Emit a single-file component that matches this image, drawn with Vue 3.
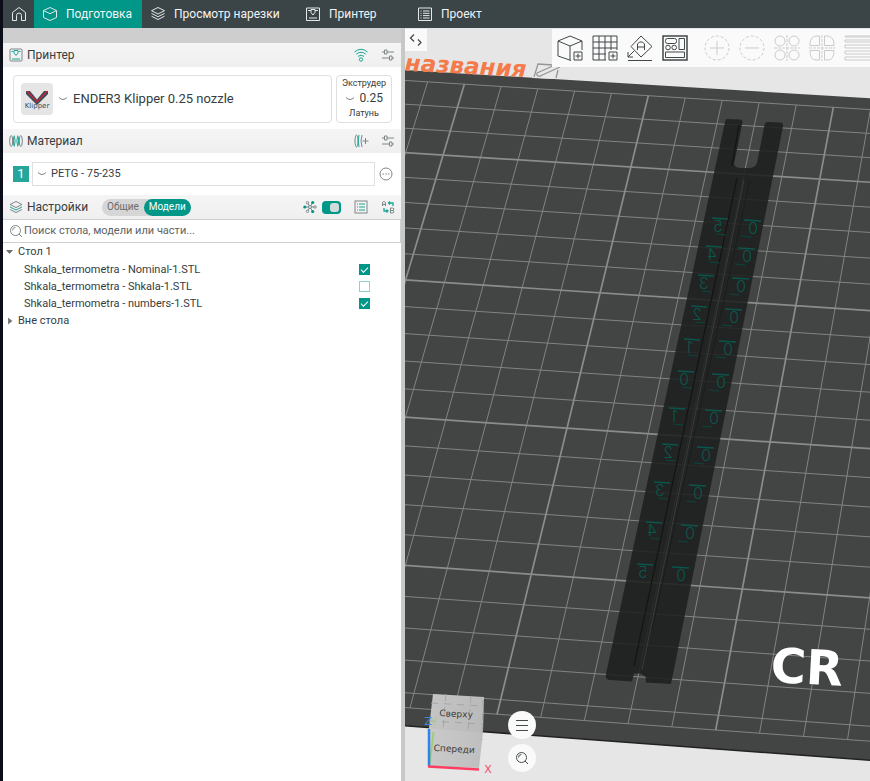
<script setup>
import { ref } from 'vue'

const tabs = [
  { id: 'prepare', label: 'Подготовка', icon: 'cube' },
  { id: 'preview', label: 'Просмотр нарезки', icon: 'layers' },
  { id: 'device', label: 'Принтер', icon: 'printer' },
  { id: 'project', label: 'Проект', icon: 'list' },
]
const activeTab = ref('prepare')
const scope = ref('objects')
const advanced = ref(true)
const query = ref('')
const parts = ref([
  { name: 'Shkala_termometra - Nominal-1.STL', printable: true },
  { name: 'Shkala_termometra - Shkala-1.STL', printable: false },
  { name: 'Shkala_termometra - numbers-1.STL', printable: true },
])

// Perspective projection of the bed: columns u, rows v -> scene coordinates
const q = [[648.3, 95.7], [833.3, 107.3], [742.3, 589], [531.3, 574.2]]
const sx = q[0][0] - q[1][0] + q[2][0] - q[3][0]
const sy = q[0][1] - q[1][1] + q[2][1] - q[3][1]
const dx1 = q[1][0] - q[2][0], dy1 = q[1][1] - q[2][1]
const dx2 = q[3][0] - q[2][0], dy2 = q[3][1] - q[2][1]
const det = dx1 * dy2 - dy1 * dx2
const g = (sx * dy2 - sy * dx2) / det
const h = (dx1 * sy - dy1 * sx) / det
function project(u, v) {
  const s = u / 5, t = v / 18
  const w = 1 + g * s + h * t
  const x = (q[0][0] + (q[1][0] - q[0][0] + g * q[1][0]) * s + (q[3][0] - q[0][0] + h * q[3][0]) * t) / w
  const y = (q[0][1] + (q[1][1] - q[0][1] + g * q[1][1]) * s + (q[3][1] - q[0][1] + h * q[3][1]) * t) / w
  return `${x.toFixed(2)} ${y.toFixed(2)}`
}
const END = 22.45
let minor = '', major = ''
for (let u = -12; u <= 12; u++) {
  const d = `M${project(u, 0)}L${project(u, END)}`
  if (u % 5 === 0) major += d
  else minor += d
}
for (let v = 0; v <= 22; v++) {
  const d = `M${project(-12, v)}L${project(12, v)}`
  if (v % 5 === 3) major += d
  else minor += d
}
minor += `M${project(-12, END)}L${project(12, END)}`

const marks = [
  ['5', 718, 226, 753, 228], ['4', 712, 254, 747, 256], ['3', 704, 283, 741, 286],
  ['2', 697, 314, 734, 317], ['1', 690, 347, 728, 349], ['0', 684, 379, 721, 382],
  ['1', 675, 416, 714, 418], ['2', 668, 452, 706, 455], ['3', 660, 490, 698, 493],
  ['4', 652, 530, 690, 533], ['5', 643, 572, 681, 575],
].flatMap(([n, x, y, x2, y2], i) => [
  { n, x, y, bar: `M${x - 6} ${y - 8}l16 1`, tick: i < 10 ? `M${x - 2} ${y + 8}l10 1` : '' },
  { n: '0', x: x2, y: y2, bar: `M${x2 - 9} ${y2 - 8}l17 1`, tick: i < 10 ? `M${x2 - 12} ${y2 + 8}l10 1` : '' },
])
</script>

<template>
  <div class="app">
    <nav class="topbar" aria-label="Разделы">
      <button class="home" aria-label="Домой">
        <svg width="16" height="16" viewBox="0 0 16 16"><path d="M1.500 14.500V6.500L8 1.500l6.500 5v8h-4V9.500a2.500 2.500 0 0 0-5 0v5z" /></svg>
      </button>
      <button v-for="t in tabs" :key="t.id" class="tab" :class="[t.id, { active: activeTab === t.id }]" @click="activeTab = t.id">
        <svg width="16" height="16" viewBox="0 0 16 16">
          <path v-if="t.icon === 'cube'" d="M8 1.500 14.500 4.500v7L8 14.500 1.500 11.500v-7zM1.500 4.500 8 7.700l6.500-3.200" />
          <path v-else-if="t.icon === 'layers'" d="M8 1.500 14.500 4.700 8 8 1.500 4.700zM1.500 7.400 8 10.700l6.500-3.300M1.500 10.200 8 13.500l6.500-3.300" />
          <path v-else-if="t.icon === 'printer'" d="M1.500 2h13v12.500h-13zM4 12h8M3 4.500h3M10 4.500h3M6 3.500h4v3L8 9 6 6.500z" />
          <path v-else d="M1.500 2h13v12.500h-13zM3.500 5h1M6 5h6.500M3.500 7.300h1M6 7.300h6.500M3.500 9.600h1M6 9.600h6.500M3.500 12h1M6 12h6.500" />
        </svg>
        <span>{{ t.label }}</span>
      </button>
    </nav>

    <main class="workspace">
      <aside class="sidebar">
        <div class="spacer"></div>
        <section>
          <header class="head">
            <svg class="ico" width="14" height="14" viewBox="0 0 14 14"><rect class="gr" x="1" y="1" width="12" height="12" rx="1" /><path class="te" d="M3 11h8M2.500 3.500h2M9.500 3.500h2M5 2.500h4v2.500L7 7.500 5 5z" /></svg>
            <h2>Принтер</h2>
            <button class="tool" aria-label="Подключение">
              <svg width="16" height="16" viewBox="0 0 16 16"><path class="te" d="M1.500 5Q8-.5 14.500 5M3.200 7.200Q8 3.200 12.800 7.200M5 9.400Q8 7 11 9.400" /><circle class="te" cx="8" cy="12.500" r="1.700" /></svg>
            </button>
            <button class="tool" aria-label="Параметры принтера">
              <svg width="14" height="14" viewBox="0 0 14 14"><path class="gr" d="M1 4h2.500M6 4h7M1 10h7.500M11 10h2M3.500 2H6v4H3.500zM8.500 8H11v4H8.500z" /></svg>
            </button>
          </header>
          <div class="cards">
            <div class="card printer">
              <svg class="logo" width="32" height="32" viewBox="0 0 32 32">
                <rect width="32" height="32" rx="4" fill="#e5e5e5" />
                <path d="M5 8h4l7 8.500L23 8h4v3L16 22 5 11z" fill="#38495b" /><path d="M5 8h2l9 10 9-10h2L16 20z" fill="#c62831" />
                <text x="16" y="25" text-anchor="middle">Klipper</text>
              </svg>
              <svg class="chev" width="10" height="6" viewBox="0 0 10 6"><path d="M1 1.500Q5 5.500 9 1.500" /></svg>
              <select aria-label="Принтер"><option>ENDER3 Klipper 0.25 nozzle</option></select>
            </div>
            <div class="card extruder">
              <label for="nozzle">Экструдер</label>
              <div class="nozzle">
                <svg class="chev" width="10" height="6" viewBox="0 0 10 6"><path d="M1 1.500Q5 5.500 9 1.500" /></svg>
                <select id="nozzle"><option>0.25</option></select>
              </div>
              <span>Латунь</span>
            </div>
          </div>
        </section>

        <section>
          <header class="head">
            <svg class="ico" width="14" height="14" viewBox="0 0 14 14"><ellipse class="gr" cx="2.200" cy="7" rx="1.500" ry="5.500" /><ellipse class="gr" cx="11.800" cy="7" rx="1.500" ry="5.500" /><path class="te" d="M5.200 1.500q2 5.500 0 11M8.800 1.500q-2 5.500 0 11M4.800 2.500q-.8 4.500 0 9M9.200 2.500q.8 4.500 0 9" /></svg>
            <h2>Материал</h2>
            <button class="tool" aria-label="Добавить материал">
              <svg width="16" height="16" viewBox="0 0 16 16"><ellipse class="gr" cx="3.500" cy="8" rx="1.500" ry="6" /><path class="te" d="M6 2Q4.500 8 6 14" /><path class="gr" d="M9 2Q7 8 9 14M9.500 8h6M12.500 5v6" /></svg>
            </button>
            <button class="tool" aria-label="Параметры материала">
              <svg width="14" height="14" viewBox="0 0 14 14"><path class="gr" d="M1 4h2.500M6 4h7M1 10h7.500M11 10h2M3.500 2H6v4H3.500zM8.500 8H11v4H8.500z" /></svg>
            </button>
          </header>
          <div class="filament">
            <span class="slot">1</span>
            <div class="combo">
              <svg class="chev" width="10" height="6" viewBox="0 0 10 6"><path d="M1 1.500Q5 5.500 9 1.500" /></svg>
              <select aria-label="Материал"><option>PETG - 75-235</option></select>
            </div>
            <button class="more" aria-label="Ещё">
              <svg width="14" height="14" viewBox="0 0 14 14"><circle class="gr" cx="7" cy="7" r="6" /><path class="gr" d="M3.500 7H5M6.300 7h1.500M9 7h1.500" /></svg>
            </button>
          </div>
        </section>

        <section>
          <header class="head">
            <svg class="ico" width="14" height="14" viewBox="0 0 14 14"><path class="gr" d="M7 1.500 13 4.500 7 7.500 1 4.500z" /><path class="te" d="M1 7l6 3 6-3" /><path class="gr" d="M1 9.500l6 3 6-3" /></svg>
            <h2>Настройки</h2>
            <div class="switch">
              <button :class="{ on: scope === 'global' }" @click="scope = 'global'">Общие</button>
              <button :class="{ on: scope === 'objects' }" @click="scope = 'objects'">Модели</button>
            </div>
            <div class="tools">
              <svg width="14" height="14" viewBox="0 0 14 14"><path class="gr" d="M2 7h10M4.500 2.700l5 8.600M9.500 2.700l-5 8.600" /><g class="gr" fill="#f2f2f2"><circle cx="4.500" cy="2.700" r="1.200" /><circle cx="4.500" cy="11.300" r="1.200" /><circle cx="12" cy="7" r="1.200" /><circle cx="7" cy="7" r="1.500" /></g><g fill="#009688"><circle cx="1.800" cy="7" r="1.600" /><circle cx="9.700" cy="2.500" r="1.600" /><circle cx="9.700" cy="11.500" r="1.600" /></g></svg>
              <input v-model="advanced" class="toggle" type="checkbox" aria-label="Расширенные настройки">
              <button class="tool" aria-label="Список параметров">
                <svg width="14" height="14" viewBox="0 0 14 14"><rect class="gr" x="1" y="1" width="12" height="12" /><path class="te" d="M3 4h1M5 4h6M3 7h1M5 7h6M3 10h1M5 10h6" /></svg>
              </button>
              <button class="tool" aria-label="Сравнить профили">
                <svg width="14" height="14" viewBox="0 0 14 14"><path class="gr" d="M1.500 6V2.500L3 1.500l1.500 1V6M1.500 4.500h3M9.500 8v5h2q2 0 1-2.500 1-2.500-1-2.500zM9.500 10.500h2.500" /><path class="te" d="M12 6V3H7.500M9 1.500 7.500 3 9 4.500M3 8v3h4M5.500 9.500 7 11l-1.500 1.500" stroke-width="1.300" /></svg>
              </button>
            </div>
          </header>
          <div class="search">
            <svg width="14" height="14" viewBox="0 0 14 14"><circle class="gr" cx="6.500" cy="6.500" r="5" /><path class="gr" d="M10 10l3 3M3.500 6.500a3 3 0 0 1 3-3" /></svg>
            <input v-model="query" type="text" aria-label="Поиск" placeholder="Поиск стола, модели или части...">
          </div>
          <ul class="tree">
            <li><div class="row"><i class="open"></i>Стол 1</div>
              <ul>
                <li v-for="(p, i) in parts" :key="p.name" class="row part">
                  <label :for="'part' + i">{{ p.name }}</label>
                  <input :id="'part' + i" v-model="p.printable" type="checkbox">
                </li>
              </ul>
            </li>
            <li><div class="row"><i></i>Вне стола</div></li>
          </ul>
        </section>
      </aside>

      <section class="view" aria-label="Рабочий стол">
        <svg class="scene" viewBox="405 28 465 753" preserveAspectRatio="xMinYMin slice">
          <defs>
            <linearGradient id="face" x1="0" y1="0" x2="1" y2="0"><stop offset="0" stop-color="#c9c9c9" /><stop offset="1" stop-color="#bdbdbd" /></linearGradient>
            <clipPath id="bed"><path d="M380 68.500 900 100v662.500L380 724z" /></clipPath>
          </defs>
          <path d="M380 68.500 900 100v662.500L380 724z" fill="#434544" />
          <path d="M380 724 900 762.500" stroke="#222" stroke-width="1.500" />
          <g fill="none" clip-path="url(#bed)">
            <path :d="minor" stroke="#828483" stroke-width="1" />
            <path :d="major" stroke="#8b8d8c" stroke-width="1.700" />
          </g>
          <text class="plate" x="0" y="0" transform="translate(526 77) rotate(3)" text-anchor="end">названия</text>
          <path d="M537 64l22 1-3 14-24-1z" fill="#e8e8e8" /><path d="M553 65l-15-1-4 13M540 76l20-9M537 73l18-8M537 73q-1 4 4 3M558 70l-2 8" fill="none" stroke="#969696" stroke-width="1.300" />
          <path d="M727 119l13 .5q3 0 2.500 3L734 164q1 4 7 4h8q6 0 8-5l7.500-38q.5-3 3-3l13 .5q3 0 2.500 4L671 684l-25-1.500-.5-6-5.500-3h-6l-2 8-22-1.500q-5-.5-4-6L725 122q.5-3 2-3z" fill="#1e201f" fill-opacity=".88" />
          <g fill="none">
            <path d="M739 125 732 166M737 178 634 666" stroke="#121413" stroke-width="1.200" />
            <path d="M744 180 642 670" stroke="#404241" stroke-width=".8" />
            <path d="M750 180 652 630" stroke="#1b1d1c" stroke-width="1" />
          </g>
          <g class="marks">
            <g v-for="(m, i) in marks" :key="i">
              <path :d="m.bar" /><path v-if="m.tick" :d="m.tick" class="thin" />
              <text :transform="`translate(${m.x} ${m.y + 6}) scale(-1 1)`" text-anchor="middle">{{ m.n }}</text>
            </g>
          </g>
          <text class="brand" transform="translate(770 682) rotate(3)">CR</text>

          <path d="M433 694 484 697l-1 35-4 36-51-2 1-38z" fill="url(#face)" fill-opacity=".97" />
          <path d="M431 703l52 3M429 721l54 3M446 694l-3 36M471 696l-3 36M483 700l-1 40" fill="none" stroke="#a6a6a6" stroke-dasharray="7 6" />
          <g class="cube"><text transform="translate(456 717) rotate(3)">Сверху</text><text transform="translate(454 752) rotate(3)">Спереди</text></g>
          <g fill="none" stroke-width="2"><path d="M433.500 732 429.500 765" stroke="#9fce78" /><path d="M429 729v37" stroke="#2d83ee" stroke-width="2.500" /><path d="M428 766.500l51 3" stroke="#ff3d62" stroke-width="2.500" /></g>
          <g class="axis"><text x="428" y="725" fill="#3c87dd">Z</text><text x="434" y="726" fill="#aacb8e">Y</text><text x="488" y="773" fill="#f7486a">X</text></g>
        </svg>

        <button class="collapse" aria-label="Свернуть панель">
          <svg width="16" height="14" viewBox="0 0 16 14"><path d="M6 1.500 2.500 5 6 8.500M10 6.500l3 3-3 3" /></svg>
        </button>
        <div class="toolbar">
          <button aria-label="Добавить модель"><svg width="26" height="26" viewBox="0 0 26 26"><path d="M14 25.500 1 21V6l12-5 12 5v9M1 6l12 5 12-5M13 11v14" /><path d="M17 17h8v8h-8zM21 18.500v5M18.500 21h5" /></svg></button>
          <button aria-label="Добавить стол"><svg width="26" height="26" viewBox="0 0 26 26"><path d="M14 25H1V1h24v14M1 7h24M1 13h24M1 19h13M7 1v24M13 1v24M19 1v14M17 17h8v8h-8zM21 18.500v5M18.500 21h5" /></svg></button>
          <button aria-label="Автоориентация"><svg width="26" height="26" viewBox="0 0 26 26"><path d="M14 1 25 11.500 14 22 4 11.500zM10.500 15v-6l2-2h3l2 2v6M10.500 12h7M7 16l-6 6M1 17v5h5M1 25.500h24" /></svg></button>
          <button aria-label="Расставить"><svg width="26" height="26" viewBox="0 0 26 26"><path d="M1 1h24v24H1z" stroke-width="1.500" /><rect x="3.500" y="3.500" width="11" height="5" rx="2" /><circle cx="6" cy="12.500" r="2.300" /><circle cx="12.200" cy="12.500" r="2.300" /><path d="M17 3.500h5.500v11H17zM3.500 17h19v5.500h-19z" /></svg></button>
          <button class="off first" aria-label="Добавить копию" disabled><svg width="26" height="26" viewBox="0 0 26 26"><circle cx="13" cy="13" r="12" stroke-dasharray="3 2" /><path d="M6 13h14M13 6v14" /></svg></button>
          <button class="off" aria-label="Убрать копию" disabled><svg width="26" height="26" viewBox="0 0 26 26"><circle cx="13" cy="13" r="12" stroke-dasharray="3 2" /><path d="M6 13h14" /></svg></button>
          <button class="off" aria-label="Разделить на модели" disabled><svg width="26" height="26" viewBox="0 0 26 26"><circle cx="6" cy="6" r="5" /><circle cx="20" cy="6" r="5" /><circle cx="6" cy="20" r="5" /><circle cx="20" cy="20" r="5" /><path d="M0 13h26M13 0v26" stroke-dasharray="3 1" /></svg></button>
          <button class="off" aria-label="Разделить на части" disabled><svg width="26" height="26" viewBox="0 0 26 26"><path d="M10.500 1v9.500H1V8q1-7 7-7zM15.500 1v9.500H25V8q-1-7-7-7zM10.500 25v-9.500H1q0 9.500 6 9.500zM15.500 25v-9.500H25q0 9.500-6 9.500z" /><path d="M0 13h26M13 0v26" stroke-dasharray="3 1" /></svg></button>
          <button class="off" aria-label="Высота слоёв" disabled><svg width="26" height="26" viewBox="0 0 26 26"><path d="M1 1h26v1H1zM1 5h26v2H1zM1 10h26v3H1zM1 16h26v3H1zM1 22h26v3H1z" /></svg></button>
        </div>
        <div class="floating">
          <button aria-label="Меню вида"><svg width="14" height="14" viewBox="0 0 14 14"><path d="M1 2.500h12M1 7.500h12M1 12.500h12" /></svg></button>
          <button aria-label="Масштаб"><svg width="14" height="14" viewBox="0 0 14 14"><circle cx="6.500" cy="6.500" r="5" /><path d="M10 10l3 3M3.500 6.500a3 3 0 0 1 3-3" /></svg></button>
        </div>
      </section>
    </main>
  </div>
</template>

<style>
body { margin: 0; background: #fff; }
</style>

<style scoped>
* { box-sizing: border-box; }
.app { min-height: 100vh; display: flex; flex-direction: column; border-left: 3px solid #0b0e19; font: 11px/18px Roboto, "Noto Sans", sans-serif; color: #363d40; }
button, select, input { font: inherit; color: inherit; margin: 0; }
button { border: 0; padding: 0; background: none; display: flex; align-items: center; justify-content: center; }
svg { fill: none; stroke-width: 1; flex: none; display: block; }
.gr { stroke: #7f8688; }
.te { stroke: #1da597; }
.topbar { display: flex; height: 28px; background: #3b4446; color: #f2f4f4; overflow: hidden; }
.topbar svg { stroke: #e4e8e8; }
.home { width: 31px; }
.tab { gap: 8px; padding: 0 8px; justify-content: flex-start; font-size: 12px; white-space: nowrap; flex: none; }
.tab.active { background: #009688; }
.tab.prepare { width: 108px; }
.tab.preview { width: 155px; }
.tab.device { width: 112px; }
.workspace { flex: 1; display: flex; }
.sidebar { flex: 0 0 402px; background: #fff; border-right: 4px solid #c8c8c8; }
.spacer { height: 15px; background: #cecece; }
.head { display: flex; align-items: center; height: 24px; padding: 0 6px; gap: 4px; background: linear-gradient(#f5f5f5, #efefef); }
.head h2 { margin: 0; font-size: 12px; font-weight: 400; flex: 1; }
.tool { margin-left: 8px; }
.cards { display: flex; gap: 4px; padding: 8px 9px 6px 10px; }
.card { border: 1px solid #dfdfdf; border-radius: 4px; height: 48px; }
.printer { flex: 1; display: flex; align-items: center; gap: 5px; padding: 0 7px; }
.printer select { font-size: 13px; flex: 1; min-width: 0; }
.logo text { font: 7px "DejaVu Sans", sans-serif; fill: #38495b; stroke: none; }
.chev { stroke: #7f8688; }
select { appearance: none; border: 0; background: none; padding: 0; }
.extruder { width: 56px; display: flex; flex-direction: column; align-items: center; font-size: 9px; line-height: 15px; }
.extruder select { font-size: 12px; line-height: 15px; }
.nozzle { display: flex; align-items: center; gap: 5px; }
.filament { display: flex; align-items: center; gap: 3px; height: 42px; padding: 0 8px 0 10px; }
.slot { width: 16px; height: 16px; line-height: 16px; text-align: center; background: #26a69a; color: #fff; font-size: 13px; }
.combo { flex: 1; height: 24px; border: 1px solid #dfdfdf; display: flex; align-items: center; gap: 4px; padding: 0 4px; }
.combo select { flex: 1; }
.more { margin-left: 1px; }
.head:has(.switch) h2 { flex: none; }
.switch { display: flex; background: #d6d6d6; border-radius: 9px; height: 17px; margin-left: 10px; color: #6b6b6b; font-size: 10px; }
.switch button { padding: 0 5px; border-radius: 9px; }
.switch .on { background: #009688; color: #fff; }
.tools { margin-left: auto; display: flex; align-items: center; gap: 5px; }
.toggle { appearance: none; width: 19px; height: 13px; border-radius: 4px; background: #009688; padding: 2px; display: flex; justify-content: flex-end; }
.toggle::after { content: ""; width: 9px; height: 9px; border-radius: 3px; background: #cfdcda; }
.toggle:not(:checked) { background: #bbb; justify-content: flex-start; }
.search { height: 24px; border: 1px solid #cfcfcf; border-left: 0; display: flex; align-items: center; gap: 1px; padding-left: 6px; }
.search input { flex: 1; border: 0; outline: 0; padding: 0; background: none; }
.search input::placeholder { color: #5c6366; opacity: 1; }
ul { list-style: none; margin: 0; padding: 0; }
.row { height: 18px; display: flex; align-items: center; gap: 5px; padding-left: 3px; }
.row i { width: 7px; height: 7px; background: #6b7072; clip-path: polygon(30% 0, 90% 50%, 30% 100%); }
.row .open { clip-path: polygon(0 20%, 100% 20%, 50% 80%); }
.part { height: 17px; padding: 0 31px 0 21px; justify-content: space-between; }
.part input { appearance: none; width: 11px; height: 11px; border: 1px solid #8fd1ca; background: #fff; display: flex; justify-content: center; }
.part input:checked { background: #009688; border-color: #009688; }
.part input:checked::after { content: ""; width: 6px; height: 3px; margin-top: 2px; border: solid #fff; border-width: 0 0 1px 1px; transform: rotate(-45deg); }
.view { flex: 1; position: relative; min-width: 0; overflow: hidden; background: #e6e6e6; }
.scene { position: absolute; inset: 0; width: 100%; height: 100%; }
.plate { font: italic 700 23px "DejaVu Sans", sans-serif; fill: #f47a4a; }
.marks { stroke: #0a564c; stroke-width: 1.3; }
.marks .thin { stroke-width: 1; stroke: #0a463f; }
.marks text { font: 300 16px Inter, sans-serif; fill: #0a564c; stroke: none; }
.brand { font: 700 48px "DejaVu Sans", sans-serif; fill: #fff; }
.cube text { font: 9px "DejaVu Sans", sans-serif; text-anchor: middle; fill: #3c3c3c; }
.axis text { font: 11px "DejaVu Sans", sans-serif; text-anchor: middle; }
.collapse { position: absolute; left: 0; top: 1px; width: 22px; height: 22px; background: #fafafa; }
.collapse svg { stroke: #444b4d; stroke-width: 1.3; }
.toolbar { position: absolute; left: 147px; right: 0; top: 1px; height: 38px; display: flex; align-items: center; gap: 9px; padding-left: 5px; background: #fafafa; overflow: hidden; }
.toolbar button { flex: none; stroke: #404749; }
.toolbar .off { stroke: #cbcbcb; }
.toolbar .first { margin-left: 7px; }
.floating { position: absolute; left: 103px; bottom: 9px; display: flex; flex-direction: column; align-items: center; gap: 5px; }
.floating button { width: 28px; height: 28px; border-radius: 50%; background: #fafafa; stroke: #454b4d; }
</style>
